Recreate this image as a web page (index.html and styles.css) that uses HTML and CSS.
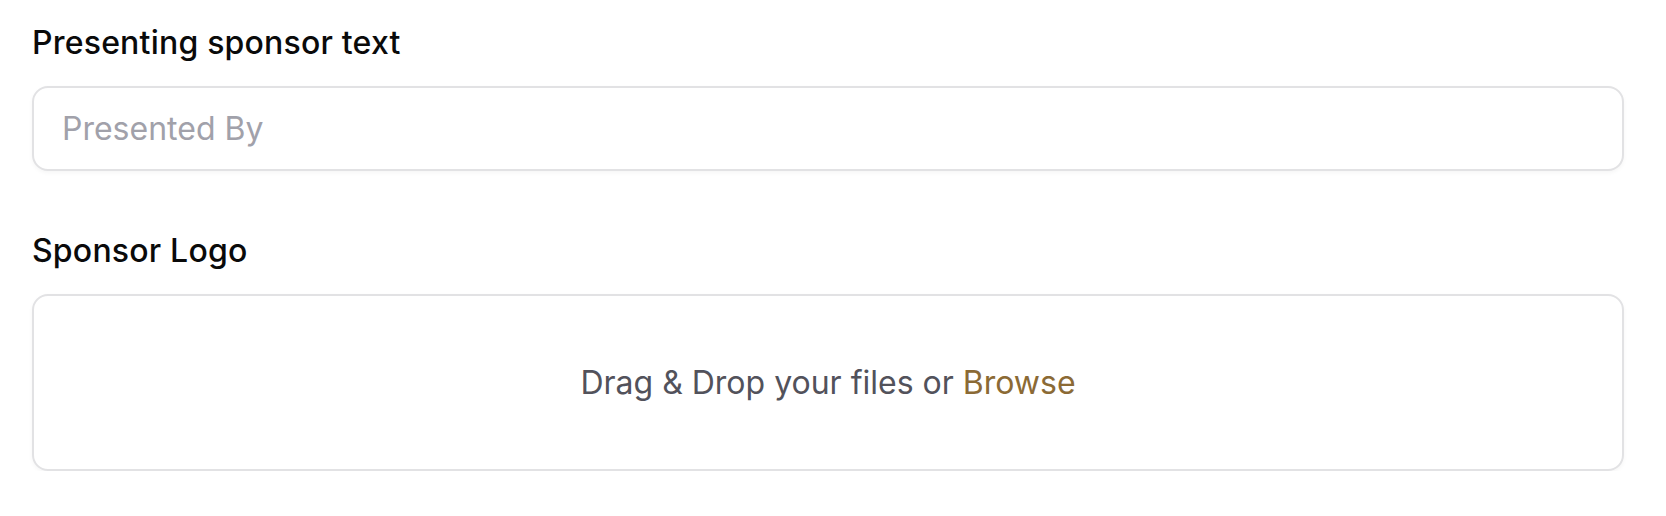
FILE: index.html
```html
<!DOCTYPE html>
<html>
<head>
<meta charset="utf-8">
<link rel="stylesheet" href="styles.css">
</head>
<body>
<div class="form">
  <div class="field">
    <label class="label" for="sponsor-text">Presenting sponsor text</label>
    <input class="input" id="sponsor-text" type="text" placeholder="Presented By">
  </div>
  <div class="field">
    <div class="label">Sponsor Logo</div>
    <div class="dropzone">
      <span class="drop-text">Drag &amp; Drop your files or <span class="browse">Browse</span></span>
    </div>
  </div>
</div>
</body>
</html>
```

FILE: styles.css
```css
* { box-sizing: border-box; }
html, body {
  margin: 0;
  background: #ffffff;
  font-family: Inter, "Noto Sans", sans-serif;
}
.form {
  padding: 22px 42px 0 32px;
  display: flex;
  flex-direction: column;
  gap: 59px;
}
.field {
  display: flex;
  flex-direction: column;
  gap: 22px;
}
.label {
  display: block;
  font-size: 32px;
  line-height: 42px;
  font-weight: 450;
  letter-spacing: 0.2px;
  color: #0a0a0a;
}
.input {
  display: block;
  width: 100%;
  height: 85px;
  border: 2px solid #e2e2e4;
  border-radius: 16px;
  padding: 0 28px;
  font-family: Inter, "Noto Sans", sans-serif;
  font-size: 32px;
  color: #0a0a0a;
  background: #fff;
  box-shadow: 0 2px 4px rgba(0,0,0,0.04);
  outline: none;
}
.input::placeholder {
  color: #a1a1aa;
}
.dropzone {
  height: 177px;
  border: 2px solid #e2e2e4;
  border-radius: 16px;
  box-shadow: 0 2px 4px rgba(0,0,0,0.04);
  display: flex;
  align-items: center;
  justify-content: center;
}
.drop-text {
  font-size: 32px;
  line-height: 42px;
  color: #52525b;
}
.browse {
  color: #8b6a35;
  cursor: pointer;
}
```
